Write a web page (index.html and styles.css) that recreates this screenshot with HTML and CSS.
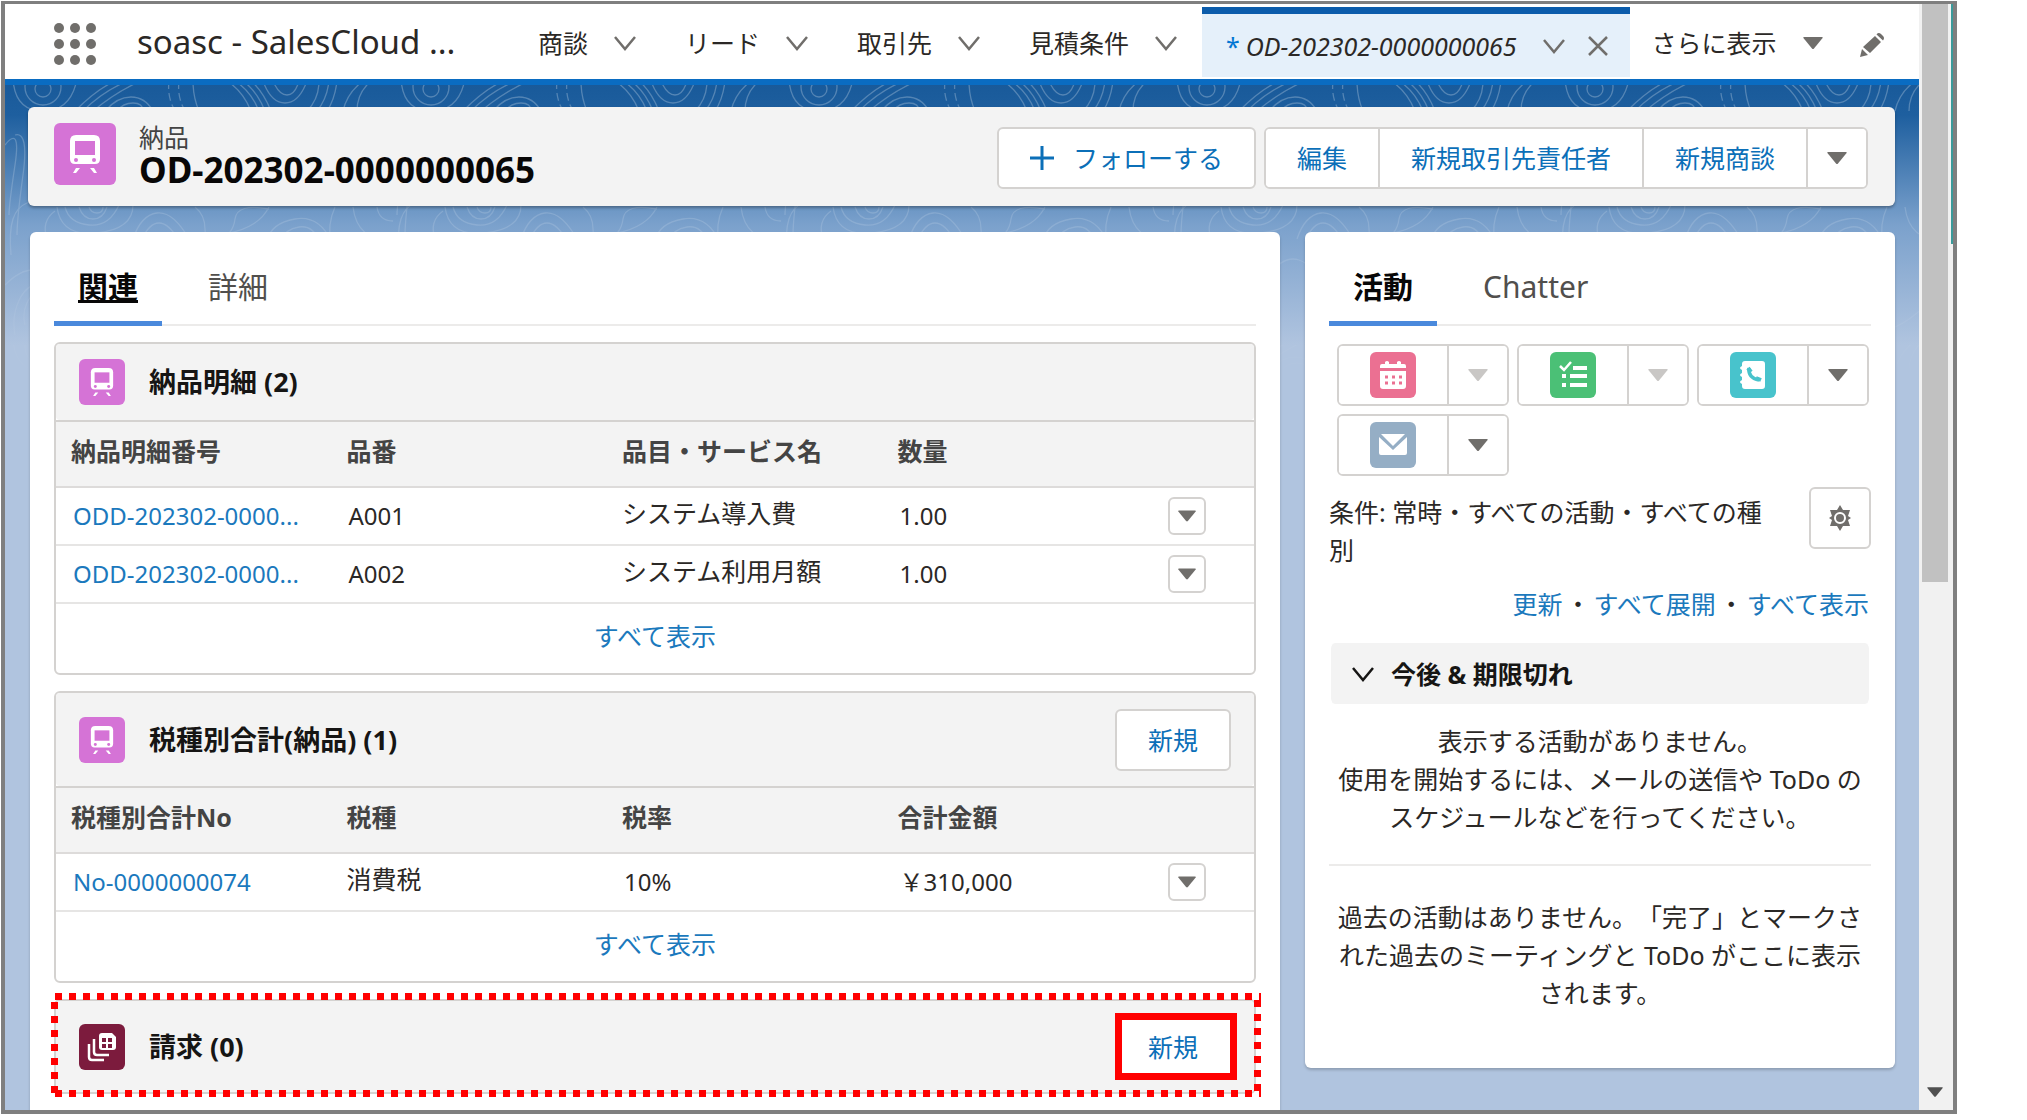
FILE: index.html
```html
<!DOCTYPE html>
<html lang="ja">
<head>
<meta charset="utf-8">
<title>OD-202302-0000000065 | soasc - SalesCloud</title>
<link rel="stylesheet" href="styles.css">
</head>
<body>
<svg class="defs" aria-hidden="true">
  <symbol id="chev" viewBox="0 0 24 24"><path d="M2 6l10 12L22 6" fill="none" stroke="currentColor" stroke-width="2.5"/></symbol>
  <symbol id="down" viewBox="0 0 20 12"><path d="M1 0h18q1 0 .6 1L11 11.500q-1 1-2 0L.4 1Q0 0 1 0z" fill="currentColor"/></symbol>
  <symbol id="train" viewBox="0 0 62 62">
    <path fill="#fff" d="M22 12h18q6 0 6 6v18q0 5-5 5H21q-5 0-5-5V18q0-6 6-6z"/>
    <path fill="#d573d6" d="M21 18h20v14H21z"/><circle cx="22" cy="37" r="2" fill="#d573d6"/><circle cx="40" cy="37" r="2" fill="#d573d6"/>
    <path d="M22 45h4l-4 5h-3zM40 45h-4l4 5h3z" fill="#fff"/>
  </symbol>
</svg>
<div class="window">
  <div class="page">
    <header class="nav">
      <button class="launcher" aria-label="アプリケーションランチャー"><i></i><i></i><i></i><i></i><i></i><i></i><i></i><i></i><i></i></button>
      <span class="app">soasc - SalesCloud ...</span>
      <nav class="items">
        <a class="item" href="#">商談<svg class="chev"><use href="#chev"/></svg></a>
        <a class="item" href="#">リード<svg class="chev"><use href="#chev"/></svg></a>
        <a class="item" href="#">取引先<svg class="chev"><use href="#chev"/></svg></a>
        <a class="item" href="#">見積条件<svg class="chev"><use href="#chev"/></svg></a>
        <a class="item current" href="#"><span class="star">*</span><em>OD-202302-0000000065</em><svg class="chev"><use href="#chev"/></svg><svg class="close" viewBox="0 0 20 20"><path d="M1 1l18 18M19 1L1 19" stroke="currentColor" stroke-width="2.5"/></svg></a>
        <a class="item more" href="#">さらに表示<svg class="down"><use href="#down"/></svg></a>
      </nav>
      <button class="pencil" aria-label="編集"><svg viewBox="0 0 26 26"><path fill="#706e6b" d="M1 25l2-8 6 6zM4 15L16 4l6 6L11 21zM17.500 2.500q2-2.500 4.500-.5l2 2q2 2 0 4.500z"/></svg></button>
    </header>
    <main class="stage">
      <svg class="topo" aria-hidden="true">
        <defs><pattern id="contours" width="388" height="260" patternUnits="userSpaceOnUse">
          <g fill="none" stroke="#fff" stroke-width="1.300">
            <circle cx="38" cy="4" r="8"/><circle cx="38" cy="2" r="18"/><path d="M8-6q2 32 30 32t34-32"/>
            <path d="M70 26Q96 0 116-6M78 26Q100 4 128-6M88 26Q112 6 140-6M100 26q12-14 26-14t22 14M112 26q6-8 16-8t10 8"/>
            <path d="M164-4q-2 16 6 30M174-4q-2 16 6 30" stroke-dasharray="8 4"/>
            <path d="M188-4q0 16 6 30M222-4q16 10 24 30M230-4q16 10 24 30M238-4q14 10 22 30M246-4q12 10 20 30M258-4q8 22 22 22t22-22M268-4q6 14 14 14t12-14M302 26q12-12 12-30M312 26q10-12 12-30M322 26q8-12 10-30M338 26q4-18 20-30M352 26q0-18 14-30"/>
            <path d="M0 60q16-20 10 20T4 130M10 50q14-4 8 40T12 150"/>
            <path d="M6 170q-2-24 2-36t14-16 20-2M42 154q-6-18 8-28M60 122q4 16 24 18t30-20M74 122q4 12 14 12t14-12M84 122q2 6 8 6t6-6M52 122q4 30 40 26t36-28"/>
            <path d="M128 154q8-24 24-26t32 26M136 156q8-18 18-18t20 18M190 122q10 8 10 22t14 10 16-20 34-10M264 122q-10 20-40 26M262 156q4-18 28-22t36 22M276 156q4-12 18-14t20 14M286 156q4-6 10-6t8 6M330 122q-8 18-4 36M348 122q4 34 40 34M372 122q2 14 16 14"/>
            <path d="M0 200q30-30 50 0t50-10 60 20 70-20 60 10 98 0M20 240a16 24 0 1 1 30 0M10 250a26 40 0 1 1 50 0"/>
          </g>
        </pattern>
        <linearGradient id="fade" x2="0" y2="1"><stop offset="0" stop-color="#fff" stop-opacity=".26"/><stop offset="1" stop-color="#fff" stop-opacity="0"/></linearGradient>
        <mask id="soft"><rect width="100%" height="100%" fill="url(#fade)"/></mask></defs>
        <g mask="url(#soft)"><rect width="100%" height="100%" fill="url(#contours)"/></g>
      </svg>
      <section class="record">
        <span class="badge big train"><svg><use href="#train"/></svg></span>
        <div class="title"><p>納品</p><h1>OD-202302-0000000065</h1></div>
        <div class="commands">
          <button class="btn follow"><svg viewBox="0 0 24 24"><path d="M12 0v24M0 12h24" stroke="currentColor" stroke-width="3"/></svg>フォローする</button>
          <div class="group">
            <button>編集</button><button>新規取引先責任者</button><button>新規商談</button><button class="drop" aria-label="その他"><svg class="down"><use href="#down"/></svg></button>
          </div>
        </div>
      </section>
      <div class="columns">
        <section class="panel left">
          <div class="tabs"><a class="on under" href="#">関連</a><a href="#">詳細</a></div>
          <article class="list">
            <header><span class="badge train"><svg><use href="#train"/></svg></span><h2>納品明細 (2)</h2></header>
            <table>
              <thead><tr><th>納品明細番号</th><th>品番</th><th>品目・サービス名</th><th>数量</th><th class="act"></th></tr></thead>
              <tbody>
                <tr><td><a href="#">ODD-202302-0000...</a></td><td>A001</td><td class="jp">システム導入費</td><td>1.00</td><td class="act"><button aria-label="操作"><svg><use href="#down"/></svg></button></td></tr>
                <tr><td><a href="#">ODD-202302-0000...</a></td><td>A002</td><td class="jp">システム利用月額</td><td>1.00</td><td class="act"><button aria-label="操作"><svg><use href="#down"/></svg></button></td></tr>
              </tbody>
            </table>
            <footer><a href="#">すべて表示</a></footer>
          </article>
          <article class="list">
            <header class="tall"><span class="badge train"><svg><use href="#train"/></svg></span><h2>税種別合計(納品) (1)</h2><button class="btn new">新規</button></header>
            <table>
              <thead><tr><th>税種別合計No</th><th>税種</th><th>税率</th><th>合計金額</th><th class="act"></th></tr></thead>
              <tbody>
                <tr><td><a href="#">No-0000000074</a></td><td class="jp">消費税</td><td>10%</td><td>￥310,000</td><td class="act"><button aria-label="操作"><svg><use href="#down"/></svg></button></td></tr>
              </tbody>
            </table>
            <footer><a href="#">すべて表示</a></footer>
          </article>
          <article class="list marked">
            <header class="tall"><span class="badge invoice"><svg viewBox="0 0 46 46"><g fill="none" stroke="#fff" stroke-width="2.500"><path d="M10 20v13q0 3 3 3h12"/><path d="M15 15v13q0 3 3 3h12"/></g><path fill="#fff" d="M23 9h10l4 4v10q0 3-3 3H23q-3 0-3-3V12q0-3 3-3z"/><path fill="#7c1b3d" d="M23 14h4v4h-4zM29 14h4v4h-4zM23 20h4v4h-4zM29 20h4v4h-4z"/></svg></span><h2>請求 (0)</h2><button class="btn hot">新規</button></header>
          </article>
        </section>
        <aside class="panel right">
          <div class="tabs"><a class="on" href="#">活動</a><a href="#">Chatter</a></div>
          <div class="actions">
            <div class="group"><button aria-label="行動"><span class="badge event"><svg viewBox="0 0 46 46"><path fill="#fff" d="M12 12h3v-2q2-2 4 0v2h8v-2q2-2 4 0v2h3q2 0 2 2v2H10v-2q0-2 2-2zM10 19h26v15q0 3-3 3H13q-3 0-3-3z"/><path stroke="#eb7092" stroke-width="3" stroke-dasharray="3 4" d="M15 25h18M15 31h18"/></svg></span></button><button class="drop off" aria-label="行動メニュー"><svg class="down"><use href="#down"/></svg></button></div>
            <div class="group"><button aria-label="ToDo"><span class="badge task"><svg viewBox="0 0 46 46"><path fill="none" stroke="#fff" stroke-width="2.500" d="M10 14l4 4 7-8"/><path stroke="#fff" stroke-width="4" d="M23 16h14M20 24h17M20 33h17M12 24h4M12 33h4"/></svg></span></button><button class="drop off" aria-label="ToDoメニュー"><svg class="down"><use href="#down"/></svg></button></div>
            <div class="group"><button aria-label="活動の記録"><span class="badge call"><svg viewBox="0 0 46 46"><path fill="#fff" d="M15 9h17q3 0 3 3v22q0 3-3 3H15q-3 0-3-3v-2q-4-2 0-4v-3q-4-2 0-4v-3q-4-2 0-4v-2q0-3 3-3z"/><path fill="none" stroke="#48c3cc" stroke-width="3.500" d="M19 16q-1 10 10 12"/><path stroke="#48c3cc" stroke-width="4" d="M18 16l3 4M26 26l5 2"/></svg></span></button><button class="drop" aria-label="活動メニュー"><svg class="down"><use href="#down"/></svg></button></div>
            <div class="group"><button aria-label="メール"><span class="badge mail"><svg viewBox="0 0 46 46"><path fill="#fff" d="M9 15l14 13 14-13v16q0 2-2 2H11q-2 0-2-2z"/><path fill="#fff" d="M11 12h24l-12 12z"/></svg></span></button><button class="drop" aria-label="メールメニュー"><svg class="down"><use href="#down"/></svg></button></div>
          </div>
          <div class="filter"><p>条件: 常時・すべての活動・すべての種別</p><button class="btn gear" aria-label="設定"><svg viewBox="0 0 26 26"><path fill="#706e6b" d="M13 0l3 5 7 0-2 6 3 2-3 2 2 6-7 0-3 5-3-5-7 0 2-6-3-2 3-2-2-6 7 0z"/><circle cx="13" cy="13" r="5" fill="none" stroke="#fff" stroke-width="2"/></svg></button></div>
          <div class="links"><a href="#">更新</a><span>・</span><a href="#">すべて展開</a><span>・</span><a href="#">すべて表示</a></div>
          <button class="expander"><svg class="chev"><use href="#chev"/></svg>今後 &amp; 期限切れ</button>
          <p class="note">表示する活動がありません。<br>使用を開始するには、メールの送信や ToDo の<br>スケジュールなどを行ってください。</p>
          <p class="note past">過去の活動はありません。「完了」とマークさ<br>れた過去のミーティングと ToDo がここに表示<br>されます。</p>
        </aside>
      </div>
    </main>
  </div>
  <div class="scroll"><span class="thumb"></span><svg><use href="#down"/></svg></div>
</div>
</body>
</html>
```
FILE: styles.css
```css
* { box-sizing: border-box; margin: 0; padding: 0; }
html, body { height: 100%; }
body {
  background: #fff;
  padding: 1px 70px 6px 1px;
  font: 25px/38px "Noto Sans", "Noto Sans CJK JP", sans-serif;
  text-spacing-trim: space-all;
  color: #2b2826;
  overflow: hidden;
}
button { font: inherit; color: #0b6fb8; background: #fff; border: 0; white-space: nowrap; }
a { color: #1b79bd; text-decoration: none; }
svg { display: block; }
.defs { position: absolute; width: 0; height: 0; }

.window { display: flex; height: 100%; border: 4px solid #7f7f7f; border-top-width: 3px; overflow: hidden; }
.page { flex: 1; min-width: 0; display: flex; flex-direction: column; }
.scroll { width: 34px; background: linear-gradient(#3a9a9a, #3a9a9a) 100% 0 / 2px 240px no-repeat #f1f1f1; padding: 0 5px 0 3px; display: flex; flex-direction: column; justify-content: space-between; align-items: center; }
.thumb { width: 26px; height: calc(52% + 3px); background: #c1c1c1; }
.scroll svg { width: 16px; height: 10px; margin-bottom: 13px; color: #505050; }

.nav { display: flex; align-items: center; height: 81px; border-bottom: 6px solid #0a6cc2; background: #fff; flex: none; padding-left: 49px; padding-right: 34px; }
.launcher { display: grid; grid-template-columns: repeat(3, 10px); gap: 6px; margin-top: 4px; }
.launcher i { width: 10px; height: 10px; border-radius: 50%; background: #706e6b; }
.app { font-size: 33px; margin-left: 41px; width: 401px; white-space: nowrap; }
.items { display: flex; align-self: stretch; flex: 1; }
.item { display: flex; align-items: center; color: #2b2826; white-space: nowrap; padding-top: 3px; }
.item .chev { margin: 0 48px 0 25px; color: #706e6b; }
.chev { width: 24px; height: 24px; }
.down { width: 20px; height: 12px; color: #706e6b; }
.current { background: #e5f0fa; border-top: 7px solid #0b5cab; margin: 3px 22px 2px -24px; padding: 0 22px 0 24px; }
.current .chev { margin: 0 22px 0 25px; }
.star { color: #0176d3; margin-right: 6px; }
.close { width: 20px; height: 20px; color: #706e6b; }
.more .down { margin-left: 26px; }
.pencil { padding-top: 6px; }
.pencil svg { width: 26px; height: 26px; }

.stage { position: relative; flex: 1; min-height: 0; padding: 22px 24px 0 23px; background: linear-gradient(#195a9a 0, #1e5f9f 30px, #7ba1cc 140px, #b0c4df 260px); }
.topo { position: absolute; left: 0; top: 0; width: 100%; height: 300px; }
.record { position: relative; display: flex; height: 99px; background: #f3f3f3; border-radius: 6px; padding: 16px 27px 0 26px; box-shadow: 0 2px 3px rgba(0, 0, 0, .3); }
.badge { display: block; width: 46px; height: 46px; border-radius: 6px; flex: none; }
.badge svg { width: 100%; height: 100%; }
.big { width: 62px; height: 62px; }
.train { background: #d573d6; }
.invoice { background: #7c1b3d; }
.event { background: #eb7092; }
.task { background: #4bc076; }
.call { background: #48c3cc; }
.mail { background: #95aec5; }
.title { flex: 1; margin-left: 23px; color: #444; }
.title p { line-height: 28px; }
.title h1 { font-size: 35px; line-height: 38px; color: #080707; }
.commands { display: flex; gap: 8px; padding-top: 4px; }
.btn { height: 62px; border: 2px solid #d4d2d0; border-radius: 6px; padding: 0 30px; flex: none; }
.follow { display: flex; align-items: center; padding: 0 31px; gap: 19px; }
.follow svg { width: 24px; height: 24px; }
.new { padding: 0 31px; }
.group { display: flex; height: 62px; border: 2px solid #d4d2d0; border-radius: 6px; overflow: hidden; background: #fff; }
.group button { padding: 0 31px; }
.group button + button { border-left: 2px solid #d4d2d0; }
.group .drop { width: 60px; padding: 0 19px; }
.off .down { color: #c9c7c5; }

.columns { position: relative; display: grid; grid-template-columns: 1250px 1fr; gap: 25px; align-items: start; margin-top: 26px; padding-left: 2px; }
.panel { background: #fff; border-radius: 6px; padding: 20px 24px 0; box-shadow: 0 2px 3px rgba(0, 0, 0, .2); }
.left { min-height: 900px; }
.right { padding-bottom: 56px; }
.tabs { display: flex; gap: 22px; border-bottom: 2px solid #ecebea; margin-bottom: 16px; font-size: 30px; }
.tabs a { padding: 16px 24px 15px; margin-bottom: -2px; color: #514f4d; border-bottom: 5px solid transparent; }
.tabs .on { border-color: #4a89dc; color: #080707; font-weight: 700; }
.under { text-decoration: underline; }

.list { border: 2px solid #d4d2d0; border-radius: 6px; background: #fff; margin-bottom: 16px; }
.list header { display: flex; align-items: center; height: 76px; padding: 0 23px; background: #f3f3f3; border-radius: 4px; }
.list header.tall { height: 93px; }
.list h2 { flex: 1; margin-left: 24px; font-size: 27px; color: #161514; }
.list table { width: 100%; table-layout: fixed; border-spacing: 0; }
.list th { width: 23%; height: 68px; background: #f3f3f3; border-top: 2px solid #d4d2d0; border-bottom: 2px solid #dddbda; text-align: left; padding: 0 0 6px 15px; color: #444; font-weight: 700; white-space: nowrap; }
.list td { height: 58px; border-bottom: 2px solid #e6e5e4; padding-left: 17px; font-size: 24px; white-space: nowrap; }
.list td.jp { font-size: 25px; padding: 0 0 6px 15px; }
.list .act { width: 8%; padding: 0 0 0 10px; }
.act button { width: 38px; height: 38px; border: 2px solid #d4d2d0; border-radius: 6px; padding: 0 8px; color: #706e6b; display: block; }
.act button svg { width: 18px; height: 12px; }
.list footer { text-align: center; padding: 13px 0 18px; }
.marked { position: relative; }
.list.marked header { height: 91px; }
.marked::after {
  content: "";
  position: absolute;
  inset: -8px -7px -5px -5px;
  background:
    repeating-linear-gradient(90deg, #f00 0 7px, transparent 7px 14px) 4px 0 / 100% 7px no-repeat,
    repeating-linear-gradient(90deg, #f00 0 7px, transparent 7px 14px) 4px 100% / 100% 7px no-repeat,
    repeating-linear-gradient(#f00 0 7px, transparent 7px 14px) 0 9px / 7px 100% no-repeat,
    repeating-linear-gradient(#f00 0 7px, transparent 7px 14px) 100% 7px / 7px 100% no-repeat;
  pointer-events: none;
}
.hot { border: 7px solid #f00; border-radius: 0; height: 67px; padding: 0 32px 0 26px; margin-right: -6px; }

.actions { display: flex; flex-wrap: wrap; gap: 8px; padding: 2px 0 0 8px; }
.filter { display: flex; justify-content: space-between; margin-top: 11px; }
.filter p { width: 450px; margin-top: 6px; }
.gear { padding: 0 16px; }
.gear svg { width: 26px; height: 26px; }
.links { text-align: right; margin: 16px 2px 20px 0; }
.links span { margin: 0 3px; }
.expander { display: flex; align-items: center; gap: 16px; width: 100%; height: 61px; padding: 0 20px; background: #f3f3f3; border: 2px solid #fff; border-width: 0 2px; border-radius: 6px; color: #161514; font-weight: 700; }
.note { text-align: center; margin-top: 18px; padding-bottom: 28px; border-bottom: 2px solid #ecebea; white-space: nowrap; }
.past { margin-top: 32px; padding: 0; border: 0; }
```
